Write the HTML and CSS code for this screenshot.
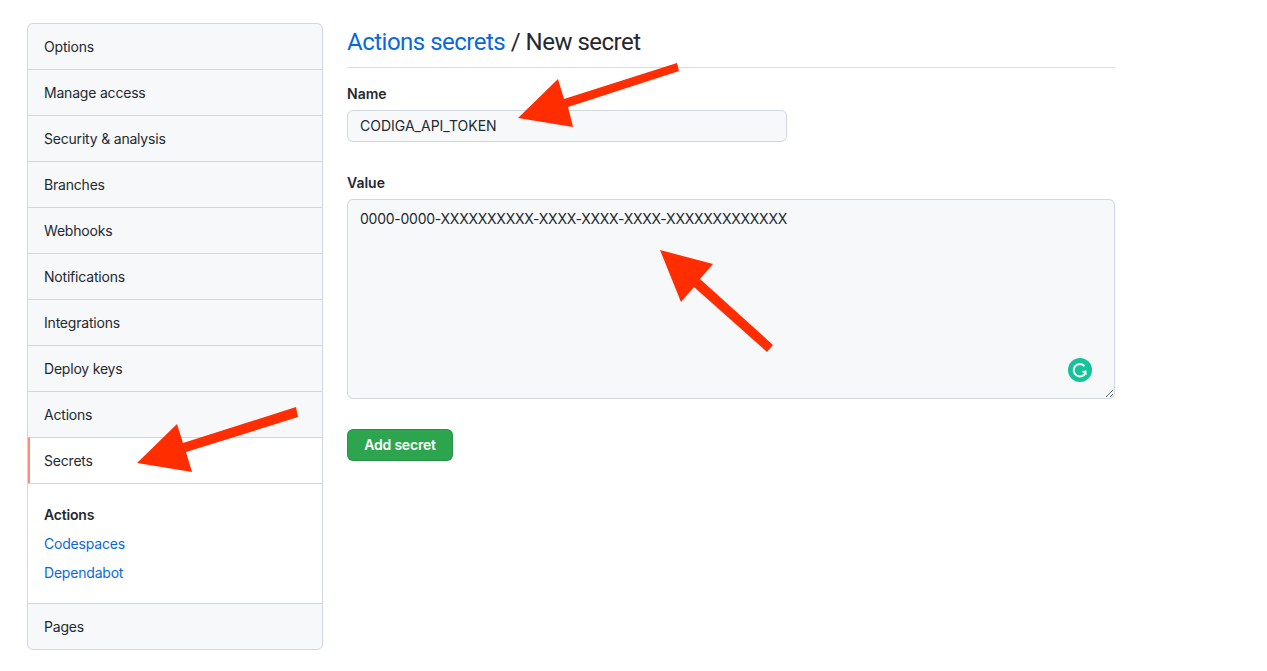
FILE: index.html
```html
<!DOCTYPE html>
<html lang="en">
<head>
  <meta charset="UTF-8">
  <meta name="viewport" content="width=device-width, initial-scale=1.0">
  <title>Actions secrets / New secret</title>
  <link rel="stylesheet" href="styles.css">
</head>
<body>
  <div class="layout">
    <nav class="menu">
      <a class="menu-item" href="#">Options</a>
      <a class="menu-item" href="#">Manage access</a>
      <a class="menu-item" href="#">Security &amp; analysis</a>
      <a class="menu-item" href="#">Branches</a>
      <a class="menu-item" href="#">Webhooks</a>
      <a class="menu-item" href="#">Notifications</a>
      <a class="menu-item" href="#">Integrations</a>
      <a class="menu-item" href="#">Deploy keys</a>
      <a class="menu-item" href="#">Actions</a>
      <a class="menu-item selected" href="#">Secrets</a>
      <div class="submenu">
        <span class="submenu-current">Actions</span>
        <a href="#">Codespaces</a>
        <a href="#">Dependabot</a>
      </div>
      <a class="menu-item" href="#">Pages</a>
    </nav>

    <main class="content">
      <h2 class="page-title"><a href="#">Actions secrets</a> / New secret</h2>

      <form>
        <div class="form-group name-group">
          <label for="secretName">Name</label>
          <input type="text" id="secretName" value="CODIGA_API_TOKEN">
        </div>

        <div class="form-group value-group">
          <label for="secretValue">Value</label>
          <div class="textarea-wrap">
            <textarea id="secretValue">0000-0000-XXXXXXXXXX-XXXX-XXXX-XXXX-XXXXXXXXXXXXX</textarea>
            <!-- grammarly badge -->
            <svg class="grammarly" width="24" height="24" viewBox="0 0 24 24">
              <circle cx="12" cy="12" r="12" fill="#15c39a"/>
              <path d="M16.6 8.2A6.2 6.2 0 1 0 17.6 14.6" fill="none" stroke="#fff" stroke-width="2"/>
              <path d="M13.6 13.4L18.4 12.2L18.6 17.2Z" fill="#fff"/>
            </svg>
          </div>
        </div>

        <button type="button" class="add-btn">Add secret</button>
      </form>
    </main>
  </div>

  <!-- annotation arrows drawn on top of the screenshot -->
  <svg class="arrows" width="1267" height="671" viewBox="0 0 1267 671">
    <polygon points="518,118 558,79 564,99 677,63 679,71 568,107 573,127"/>
    <polygon points="660,250 713,264 700,279 773,345 767,352 694,287 681,302"/>
    <polygon points="137,463 177,424 183,443 296,407 298,417 186,452 192,472"/>
  </svg>
</body>
</html>
```

FILE: styles.css
```css
html, body {
  margin: 0;
  padding: 0;
  background: white;
}
body {
  position: relative;
  height: 671px;
  overflow: hidden;
  font-family: Inter, "Liberation Sans", sans-serif;
  font-size: 14px;
  color: #24292f;
}
a {
  color: #0969da;
  text-decoration: none;
}
.layout {
  display: flex;
  gap: 24px;
  padding: 23px 0 0 27px;
}
.menu {
  width: 296px;
  height: 627px;
  box-sizing: border-box;
  background: #f6f8fa;
  border: 1px solid #d0d7de;
  border-radius: 6px;
  overflow: hidden;
  flex-shrink: 0;
  letter-spacing: -0.2px;
}
.menu-item {
  display: block;
  box-sizing: border-box;
  height: 46px;
  padding: 14px 16px 0;
  line-height: 18px;
  color: #24292f;
  border-top: 1px solid #d0d7de;
}
.menu-item:first-child {
  height: 45px;
  padding-top: 14px;
  border-top: none;
}
.menu-item.selected {
  background: white;
  border-left: 2px solid #fd8c73;
  padding-left: 14px;
}
.submenu {
  display: flex;
  flex-direction: column;
  box-sizing: border-box;
  height: 120px;
  padding: 22px 16px 0;
  gap: 11px;
  line-height: 18px;
  background: white;
  border-top: 1px solid #d0d7de;
}
.submenu-current {
  font-weight: 600;
}
.content {
  width: 768px;
}
.page-title {
  margin: 0;
  height: 44px;
  font-family: Roboto, Inter, sans-serif;
  font-size: 24px;
  font-weight: 400;
  line-height: 38px;
  letter-spacing: -0.5px;
  border-bottom: 1px solid #d8dee4;
}
.form-group label {
  display: block;
  font-weight: 600;
  line-height: 18px;
  margin-bottom: 7px;
}
.name-group {
  margin-top: 17px;
}
.value-group {
  margin-top: 32px;
}
input[type="text"], textarea {
  display: block;
  box-sizing: border-box;
  font-family: inherit;
  font-size: 14px;
  line-height: 20px;
  color: #24292f;
  background: #f6f8fa;
  border: 1px solid #d0d7de;
  border-radius: 6px;
  padding: 4px 12px 6px;
  outline: none;
}
input[type="text"] {
  width: 440px;
  height: 32px;
}
.textarea-wrap {
  position: relative;
}
textarea {
  width: 768px;
  height: 200px;
  padding-top: 9px;
  letter-spacing: -0.25px;
  resize: vertical;
}
.grammarly {
  position: absolute;
  right: 23px;
  bottom: 17px;
}
.add-btn {
  display: block;
  margin-top: 30px;
  width: 106px;
  height: 32px;
  padding: 0 0 2px;
  font-family: inherit;
  font-size: 14px;
  font-weight: 600;
  letter-spacing: -0.2px;
  color: white;
  background: #2da44e;
  border: 1px solid rgba(27,31,36,0.15);
  border-radius: 6px;
}
.arrows {
  position: absolute;
  top: 0;
  left: 0;
  fill: #ff2d00;
  pointer-events: none;
}
```
